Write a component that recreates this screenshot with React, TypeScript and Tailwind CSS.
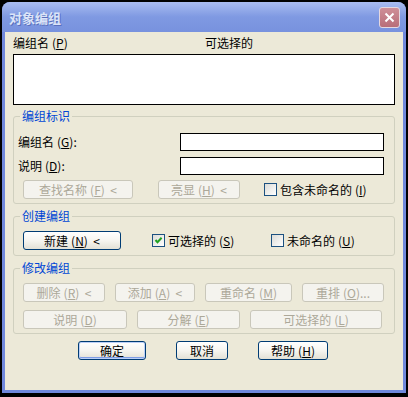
import React from "react";

function M({ t, k, s = "" }: { t: string; k: string; s?: string }) {
  return (
    <>
      {t}
      <span className="ml-[3px]">(</span>
      <span className="underline">{k}</span>){s}
    </>
  );
}

function Btn({
  w,
  children,
  disabled = false,
  def = false,
}: {
  w: string;
  children: React.ReactNode;
  disabled?: boolean;
  def?: boolean;
}) {
  const base =
    "flex h-[19px] shrink-0 items-center justify-center rounded-[3px] border text-[12px] leading-none whitespace-pre";
  const look = disabled
    ? "border-[#c9c7ba] bg-[#f4f3ee] text-[#aca899]"
    : "border-[#003c74] bg-gradient-to-b from-white via-[#f6f5f0] to-[#e3e1d6] text-black";
  const glow = def ? "shadow-[inset_0_0_0_1px_#bcd0f7,inset_0_-2px_0_0_#7f9de6]" : "";
  return <div className={`${base} ${look} ${glow} ${w}`}>{children}</div>;
}

function Chk({ checked = false }: { checked?: boolean }) {
  return (
    <div className="flex h-[13px] w-[13px] shrink-0 items-center justify-center border border-[#1c5180] bg-gradient-to-br from-[#dcdcd7] to-white">
      {checked && (
        <svg width="9" height="9" viewBox="0 0 9 9">
          <path d="M1.5 4 L3.5 6.2 L7.6 1.8" fill="none" stroke="#21a121" strokeWidth="2" />
        </svg>
      )}
    </div>
  );
}

function Group({
  title,
  className,
  children,
}: {
  title: string;
  className: string;
  children: React.ReactNode;
}) {
  return (
    <div className={`relative mx-[8px] w-[382px] rounded-[3px] border border-[#d0d0bf] ${className}`}>
      <span className="absolute -top-[8px] left-[6px] bg-[#ece9d8] px-[2px] text-[12px] leading-[14px] text-[#0046d5]">
        {title}
      </span>
      {children}
    </div>
  );
}

export default function App() {
  return (
    <div className="h-[397px] w-[408px] bg-black pl-[2px] pt-[2px] font-['Noto_Sans_CJK_SC',sans-serif] text-[12px] text-black">
      <div className="flex h-[391px] w-[404px] flex-col overflow-hidden rounded-t-[8px] bg-[#7088dc]">
        <div className="flex h-[30px] shrink-0 items-center justify-between bg-gradient-to-b from-[#a9bcf0] via-[#7f99e2] to-[#7892de] pl-[7px] pr-[6px]">
          <span className="text-[13px] font-bold leading-none text-[#dbe4f8] [text-shadow:1px_1px_0_#5a6fbd]">
            对象编组
          </span>
          <div className="flex h-[21px] w-[21px] items-center justify-center rounded-[3px] border border-[#e4d8e0] bg-gradient-to-b from-[#cf8f98] to-[#b86e79]">
            <svg width="11" height="11" viewBox="0 0 11 11">
              <path d="M1.5 1.5 L9.5 9.5 M9.5 1.5 L1.5 9.5" stroke="white" strokeWidth="2" />
            </svg>
          </div>
        </div>
        <div className="mx-[3px] mb-[3px] flex flex-1 flex-col bg-[#ece9d8]">
          <div className="mt-[4px] flex h-[14px] pl-[8px] leading-[14px]">
            <span className="w-[192px]">
              <M t="编组名" k="P" />
            </span>
            <span>可选择的</span>
          </div>
          <div className="mx-[8px] mt-[4px] h-[51px] w-[382px] border border-black bg-white" />

          <Group title="编组标识" className="mt-[11px] pb-[4px] pt-[16px]">
            <div className="flex h-[18px] items-center pl-[4px]">
              <span className="w-[162px] leading-[14px]">
                <M t="编组名" k="G" s=":" />
              </span>
              <div className="h-[18px] w-[204px] border border-black bg-white" />
            </div>
            <div className="mt-[6px] flex h-[18px] items-center pl-[4px]">
              <span className="w-[162px] leading-[14px]">
                <M t="说明" k="D" s=":" />
              </span>
              <div className="h-[18px] w-[204px] border border-black bg-white" />
            </div>
            <div className="mt-[5px] flex items-center pl-[9px]">
              <Btn w="w-[110px]" disabled>
                <M t="查找名称" k="F" s="  <" />
              </Btn>
              <div className="ml-[25px]">
                <Btn w="w-[82px]" disabled>
                  <M t="亮显" k="H" s="  <" />
                </Btn>
              </div>
              <div className="ml-[24px] flex items-center gap-[3px]">
                <Chk />
                <span className="leading-[14px]">
                  <M t="包含未命名的" k="I" />
                </span>
              </div>
            </div>
          </Group>

          <Group title="创建编组" className="mt-[12px] pb-[5px] pt-[14px]">
            <div className="flex items-center pl-[9px]">
              <Btn w="w-[98px]">
                <M t="新建" k="N" s="  <" />
              </Btn>
              <div className="ml-[31px] flex w-[119px] items-center gap-[3px]">
                <Chk checked />
                <span className="leading-[14px]">
                  <M t="可选择的" k="S" />
                </span>
              </div>
              <div className="flex items-center gap-[3px]">
                <Chk />
                <span className="leading-[14px]">
                  <M t="未命名的" k="U" />
                </span>
              </div>
            </div>
          </Group>

          <Group title="修改编组" className="mt-[12px] pb-[4px] pt-[14px]">
            <div className="flex gap-[10px] pl-[9px]">
              <Btn w="w-[82px]" disabled>
                <M t="删除" k="R" s="  <" />
              </Btn>
              <Btn w="w-[80px]" disabled>
                <M t="添加" k="A" s="  <" />
              </Btn>
              <Btn w="w-[87px]" disabled>
                <M t="重命名" k="M" />
              </Btn>
              <Btn w="w-[82px]" disabled>
                <M t="重排" k="O" s="..." />
              </Btn>
            </div>
            <div className="mt-[8px] flex gap-[10px] pl-[9px]">
              <Btn w="w-[104px]" disabled>
                <M t="说明" k="D" />
              </Btn>
              <Btn w="w-[103px]" disabled>
                <M t="分解" k="E" />
              </Btn>
              <Btn w="w-[132px]" disabled>
                <M t="可选择的" k="L" />
              </Btn>
            </div>
          </Group>

          <div className="mt-[7px] flex gap-[30px] pl-[73px]">
            <Btn w="w-[68px]" def>
              确定
            </Btn>
            <Btn w="w-[52px]">取消</Btn>
            <Btn w="w-[70px]">
              <M t="帮助" k="H" />
            </Btn>
          </div>
        </div>
      </div>
    </div>
  );
}
